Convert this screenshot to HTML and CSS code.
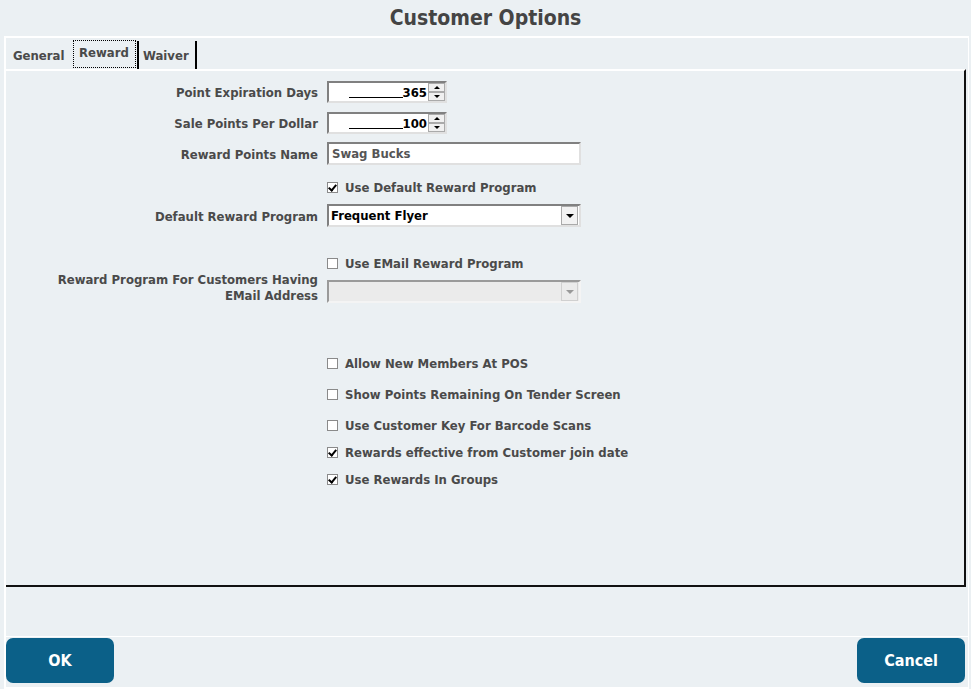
FILE: index.html
```html
<!DOCTYPE html>
<html lang="en">
<head>
    <meta charset="UTF-8">
    <title>Customer Options</title>
    <link rel="stylesheet" href="styles.css">
</head>
<body>

    <h1 class="title">Customer Options</h1>

    <div class="frame">
        <div class="tabs">
            <div class="tab tab-general">General</div>
            <div class="tab tab-active">Reward</div>
            <div class="tab tab-last">Waiver</div>
        </div>

        <div class="panel">
            <div class="row row-first">
                <label class="label">Point Expiration Days</label>
                <div class="spin">
                    <span class="spin-value"><span class="blank"></span>365</span>
                    <span class="spin-btns">
                        <span class="spin-btn"><i class="tri-up"></i></span>
                        <span class="spin-btn"><i class="tri-down"></i></span>
                    </span>
                </div>
            </div>

            <div class="row row-2">
                <label class="label">Sale Points Per Dollar</label>
                <div class="spin">
                    <span class="spin-value"><span class="blank"></span>100</span>
                    <span class="spin-btns">
                        <span class="spin-btn"><i class="tri-up"></i></span>
                        <span class="spin-btn"><i class="tri-down"></i></span>
                    </span>
                </div>
            </div>

            <div class="row row-3">
                <label class="label">Reward Points Name</label>
                <div class="text-input">Swag Bucks</div>
            </div>

            <div class="row check-row row-4">
                <span class="label"></span>
                <span class="check checked"></span>
                <span class="check-text">Use Default Reward Program</span>
            </div>

            <div class="row row-5">
                <label class="label">Default Reward Program</label>
                <div class="select">
                    <span class="select-value">Frequent Flyer</span>
                    <span class="select-btn"><i class="tri-down big"></i></span>
                </div>
            </div>

            <div class="row check-row row-6">
                <span class="label"></span>
                <span class="check"></span>
                <span class="check-text">Use EMail Reward Program</span>
            </div>

            <div class="row row-email">
                <label class="label">Reward Program For Customers Having<br>EMail Address</label>
                <div class="select select-disabled">
                    <span class="select-value"></span>
                    <span class="select-btn"><i class="tri-down big"></i></span>
                </div>
            </div>

            <div class="row check-row row-8">
                <span class="label"></span>
                <span class="check"></span>
                <span class="check-text">Allow New Members At POS</span>
            </div>

            <div class="row check-row row-9">
                <span class="label"></span>
                <span class="check"></span>
                <span class="check-text">Show Points Remaining On Tender Screen</span>
            </div>

            <div class="row check-row row-9">
                <span class="label"></span>
                <span class="check"></span>
                <span class="check-text">Use Customer Key For Barcode Scans</span>
            </div>

            <div class="row check-row row-10">
                <span class="label"></span>
                <span class="check checked"></span>
                <span class="check-text">Rewards effective from Customer join date</span>
            </div>

            <div class="row check-row row-10">
                <span class="label"></span>
                <span class="check checked"></span>
                <span class="check-text">Use Rewards In Groups</span>
            </div>
        </div>

        <div class="spacer"></div>

        <div class="buttons">
            <button class="btn">OK</button>
            <button class="btn">Cancel</button>
        </div>
    </div>

</body>
</html>
```

FILE: styles.css
```css
body {
    margin: 0;
    background: #ebf0f3;
    font-family: "DejaVu Sans Condensed", "DejaVu Sans", sans-serif;
    font-weight: bold;
    font-size: 13px;
    color: #4a4a4a;
}

.title {
    margin: 0;
    height: 36px;
    line-height: 36px;
    text-align: center;
    font-size: 21px;
    color: #444;
}

.frame {
    margin: 0 2px 0 4px;
    border-top: 2px solid #fff;
    border-left: 2px solid #fff;
    border-right: 1px solid #fff;
    border-bottom: 2px solid #fff;
    height: 649px;
    display: flex;
    flex-direction: column;
}

/* tab strip */
.tabs {
    display: flex;
    height: 31px;
    padding-left: 2px;
    align-items: flex-end;
}

.tab {
    box-sizing: border-box;
    height: 28px;
    line-height: 30px;
    padding-left: 5px;
    color: #4a4a4a;
}

.tab-general {
    width: 63px;
}

.tab-active {
    width: 63px;
    height: 28px;
    line-height: 24px;
    margin-bottom: 1px;
    margin-left: 2px;
    border: 1px dotted #000;
}

.tab-last {
    width: 60px;
    margin-left: 1px;
    border-left: 2px solid #000;
    border-right: 2px solid #000;
    padding-left: 4px;
}

.panel {
    height: 514px;
    margin-right: 2px;
    border-top: 2px solid #fff;
    border-right: 2px solid #111;
    border-bottom: 2px solid #111;
}

/* form rows */
.row {
    display: flex;
    align-items: center;
    height: 22px;
}

.row-first { margin-top: 10px; }
.row-2 { margin-top: 9px; }
.row-3 { margin-top: 8px; height: 23px; }
.row-4 { margin-top: 13px; }
.row-5 { margin-top: 8px; height: 23px; }
.row-6 { margin-top: 27px; }
.row-8 { margin-top: 51px; }
.row-9 { margin-top: 13px; }
.row-10 { margin-top: 9px; }

.row-email {
    margin-top: -1px;
    height: 32px;
    align-items: flex-end;
}

.label {
    flex: 0 0 312px;
    text-align: right;
    margin-right: 9px;
    line-height: 16px;
    padding-top: 2px;
}

.row-email .label {
    padding-top: 0;
    margin-bottom: -1px;
}

.check-row {
    height: 18px;
}

.check {
    width: 9px;
    height: 9px;
    border: 1px solid #8a8a8a;
    background: #fff;
    position: relative;
}

.checked::after {
    content: "";
    position: absolute;
    left: 2px;
    top: 0;
    width: 3px;
    height: 6px;
    border-right: 2px solid #000;
    border-bottom: 2px solid #000;
    transform: rotate(40deg);
}

.check-text {
    margin-left: 7px;
}

/* numeric spinner */
.spin {
    width: 116px;
    height: 18px;
    display: flex;
    border: 2px solid;
    border-color: #808080 #e0e0e0 #e0e0e0 #808080;
    background: #fff;
}

.spin-value {
    flex: 1;
    text-align: right;
    padding-right: 1px;
    color: #000;
    line-height: 19px;
}

.blank {
    display: inline-block;
    width: 54px;
    height: 14px;
    border-bottom: 1px solid #000;
    vertical-align: top;
}

.spin-btns {
    width: 17px;
    display: flex;
    flex-direction: column;
}

.spin-btn {
    flex: 1;
    background: #f0f0f0;
    border: 1px solid #aaa;
    display: flex;
    align-items: center;
    justify-content: center;
}

.tri-up,
.tri-down {
    width: 0;
    height: 0;
    border-left: 3px solid transparent;
    border-right: 3px solid transparent;
}

.tri-up { border-bottom: 3px solid #000; }
.tri-down { border-top: 3px solid #000; }

.tri-down.big {
    border-left-width: 4px;
    border-right-width: 4px;
    border-top-width: 4px;
}

/* text input and selects */
.text-input,
.select {
    width: 247px;
    height: 19px;
    border: 2px solid;
    border-color: #808080 #e0e0e0 #e0e0e0 #808080;
    background: #fff;
    line-height: 19px;
    padding-left: 3px;
    color: #555;
}

.select {
    width: 250px;
    display: flex;
    padding: 0;
    color: #000;
}

.select-value {
    flex: 1;
    padding-left: 2px;
}

.select-btn {
    width: 15px;
    margin: 0 1px 0 0;
    background: #f2f2f2;
    border: 1px solid #aaa;
    display: flex;
    align-items: center;
    justify-content: center;
}

.select-disabled {
    background: #ebebeb;
    border-color: #9a9a9a #f4f4f4 #f4f4f4 #9a9a9a;
}

.select-disabled .select-btn {
    background: #ebebeb;
    border-color: #d0d0d0;
}

.select-disabled .tri-down {
    border-top-color: #999;
}

.spacer {
    height: 49px;
    border-bottom: 1px solid #fff;
}

/* bottom buttons */
.buttons {
    display: flex;
    justify-content: space-between;
    padding: 1px 3px 0 0;
}

.btn {
    width: 108px;
    height: 45px;
    background: #0b6088;
    color: #fff;
    border: none;
    border-radius: 7px;
    font-family: "DejaVu Sans Condensed", "DejaVu Sans", sans-serif;
    font-weight: bold;
    font-size: 16px;
    cursor: pointer;
}
```
